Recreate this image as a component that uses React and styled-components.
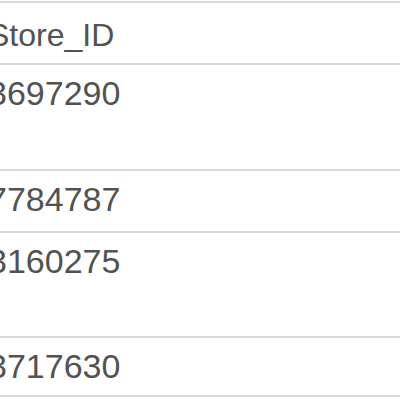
import React from 'react';
import styled, { createGlobalStyle } from 'styled-components';

const GlobalStyle = createGlobalStyle`
  html, body {
    margin: 0;
    padding: 0;
    background: #fff;
  }
`;

const StyledTable = styled.div`
  margin: 1px 0 0 -12px;
  width: calc(100% + 12px);
  overflow: hidden;
  font-family: 'Liberation Sans', Arial, sans-serif;
  color: #525252;
`;

const Row = styled.div`
  display: flex;
  align-items: flex-start;
  box-sizing: content-box;
  height: ${({ $height }) => $height}px;
  border-top: 2px solid #d9d9d9;

  &:last-child {
    border-bottom: 2px solid #d9d9d9;
  }
`;

const HeaderCell = styled.div`
  padding-top: 14px;
  font-size: 32px;
  line-height: 36px;
  white-space: nowrap;
`;

const Cell = styled.div`
  padding-top: 9px;
  font-size: 34px;
  line-height: 38px;
  white-space: nowrap;
`;

const rows = [
  { id: '3697290', height: 104 },
  { id: '7784787', height: 60 },
  { id: '3160275', height: 103 },
  { id: '3717630', height: 57 },
];

const App = () => (
  <>
    <GlobalStyle />
    <StyledTable>
      <Row $height={60}>
        <HeaderCell>Store_ID</HeaderCell>
      </Row>
      {rows.map((row) => (
        <Row key={row.id} $height={row.height}>
          <Cell>{row.id}</Cell>
        </Row>
      ))}
    </StyledTable>
  </>
);

export default App;
